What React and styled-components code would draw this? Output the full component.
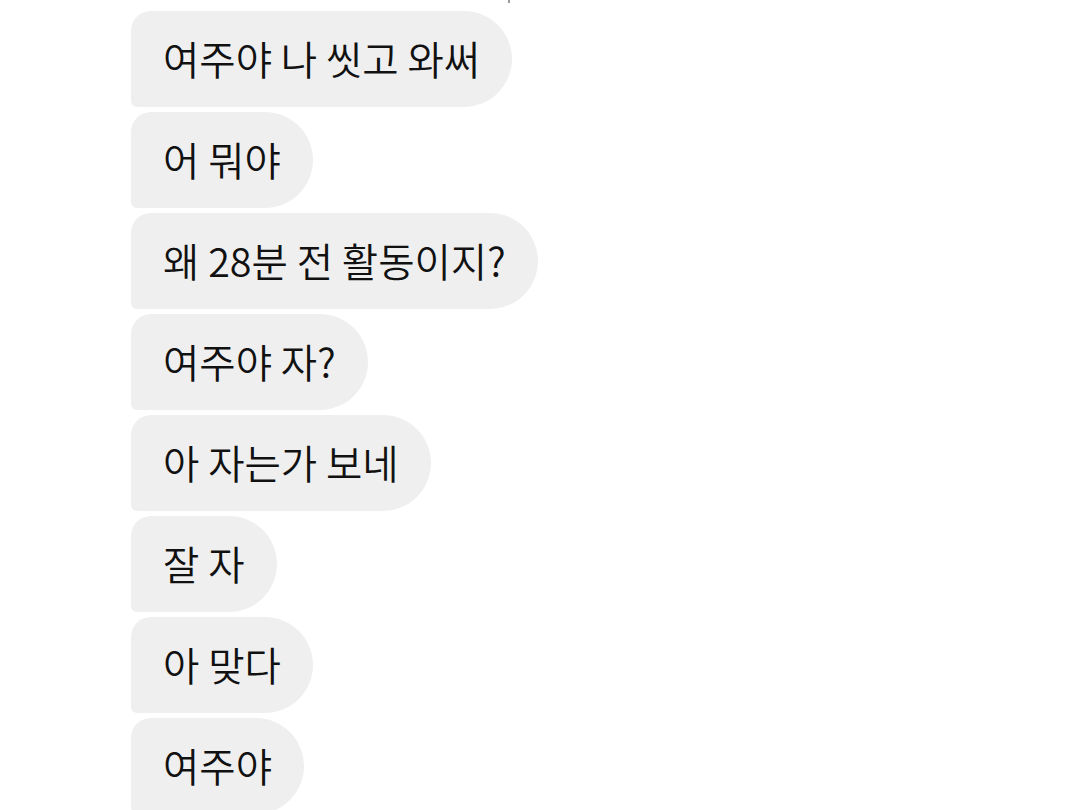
import React from "react";
import styled, { createGlobalStyle } from "styled-components";

const Global = createGlobalStyle`
  html, body { margin: 0; padding: 0; background: #ffffff; }
  body { font-family: "Noto Sans CJK KR", "Noto Sans", sans-serif; }
`;

const Page = styled.div`
  width: 1080px;
  height: 810px;
  overflow: hidden;
  position: relative;
  background: #ffffff;
`;

const Thread = styled.div`
  display: flex;
  flex-direction: column;
  align-items: flex-start;
  gap: 5px;
  padding: 11px 0 0 131px;
`;

const Bubble = styled.div`
  box-sizing: border-box;
  height: 96px;
  padding: 0 32px 2px;
  display: flex;
  align-items: center;
  background: #efefef;
  color: #111111;
  font-size: 39.5px;
  font-weight: 350;
  line-height: 1;
  white-space: nowrap;
  border-radius: 20px 48px 48px 6px;
`;

const TopMark = styled.div`
  position: absolute;
  left: 508px;
  top: 0;
  width: 2px;
  height: 3px;
  background: #9a9a9a;
`;

const messages = [
  "여주야 나 씻고 와써",
  "어 뭐야",
  "왜 28분 전 활동이지?",
  "여주야 자?",
  "아 자는가 보네",
  "잘 자",
  "아 맞다",
  "여주야",
];

export default function App() {
  return (
    <Page>
      <Global />
      <TopMark />
      <Thread>
        {messages.map((m, i) => (
          <Bubble key={i}>{m}</Bubble>
        ))}
      </Thread>
    </Page>
  );
}
